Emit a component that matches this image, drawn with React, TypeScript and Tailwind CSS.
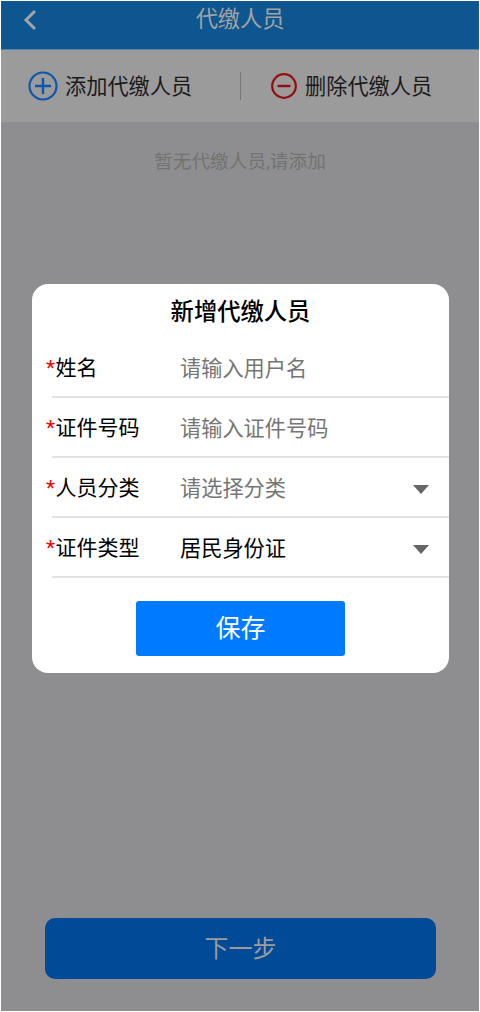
const cjk = "font-['Roboto','Noto_Sans_CJK_SC',sans-serif]";

function FormRow({ label, value, placeholder, select }: { label: string; value: string; placeholder?: boolean; select?: boolean }) {
  return (
    <div className="relative flex h-[60px] items-center pl-[14px] pt-[2px]">
      <div className="flex w-[134px] shrink-0 items-center text-[21px] text-black">
        <span className="w-[9.5px] text-[#ff0000]">*</span>
        {label}
      </div>
      <div className={`flex-1 text-[21.2px] ${placeholder ? "text-[#757575]" : "text-black"}`}>{value}</div>
      {select && (
        <svg width="16" height="9" viewBox="0 0 16 9" className="mr-[20px]">
          <path d="M0 0H16L8 9Z" fill="#666666" />
        </svg>
      )}
      <div className="absolute bottom-0 left-[20px] right-0 h-[2px] bg-[#e2e2e2]" />
    </div>
  );
}

export default function App() {
  return (
    <div className={`relative flex h-[1012px] w-[480px] flex-col border border-white bg-[#8e8e90] ${cjk}`}>
      <header className="relative flex h-[48px] shrink-0 items-center justify-center bg-[#0d5690] pb-[10px]">
        <svg width="14" height="22" viewBox="0 0 14 22" className="absolute left-[22px] top-[8px]">
          <path d="M12 2L3 11L12 20" fill="none" stroke="#a3a3a3" strokeWidth="3" />
        </svg>
        <h1 className="text-[22.2px] font-normal text-[#a3a3a3]">代缴人员</h1>
      </header>

      <div className="flex h-[73px] shrink-0 items-center border-t border-[#4f86b0] bg-[#9b9b9b]">
        <div className="flex w-[239px] items-center pl-[27px]">
          <svg width="30" height="30" viewBox="0 0 30 30" className="mr-[7px]">
            <circle cx="15" cy="15" r="13.5" fill="none" stroke="#0b57ae" strokeWidth="2.2" />
            <path d="M15 7V23M7 15H23" stroke="#0b57ae" strokeWidth="2.4" />
          </svg>
          <span className="pt-[2px] text-[21.2px] text-[#1a1a1a]">添加代缴人员</span>
        </div>
        <div className="h-[28px] w-px bg-[#777777]" />
        <div className="flex flex-1 items-center pl-[30px]">
          <svg width="26" height="26" viewBox="0 0 26 26" className="mr-[8px]">
            <circle cx="13" cy="13" r="11.8" fill="none" stroke="#970c0c" strokeWidth="2.2" />
            <path d="M6.5 13H19.5" stroke="#970c0c" strokeWidth="2.4" />
          </svg>
          <span className="pt-[2px] text-[21.2px] text-[#1a1a1a]">删除代缴人员</span>
        </div>
      </div>

      <p className="mt-[26px] text-center text-[18.7px] text-[#727272]">暂无代缴人员,请添加</p>

      <button className="absolute left-[44px] top-[917px] h-[61px] w-[391px] rounded-[10px] bg-[#004a98] text-[24px] text-[#9c9c9c]">
        下一步
      </button>

      <div className="absolute left-[31px] top-[283px] h-[389px] w-[417px] rounded-[16px] bg-white">
        <h2 className="pt-[12px] text-center text-[23.3px] leading-[32px] font-medium text-black">新增代缴人员</h2>
        <div className="mt-[10px]">
          <FormRow label="姓名" value="请输入用户名" placeholder />
          <FormRow label="证件号码" value="请输入证件号码" placeholder />
          <FormRow label="人员分类" value="请选择分类" placeholder select />
          <FormRow label="证件类型" value="居民身份证" select />
        </div>
        <button className="mx-auto mt-[23px] block h-[55px] w-[209px] rounded-[3px] bg-[#007aff] text-[25px] text-white">
          保存
        </button>
      </div>
    </div>
  );
}
